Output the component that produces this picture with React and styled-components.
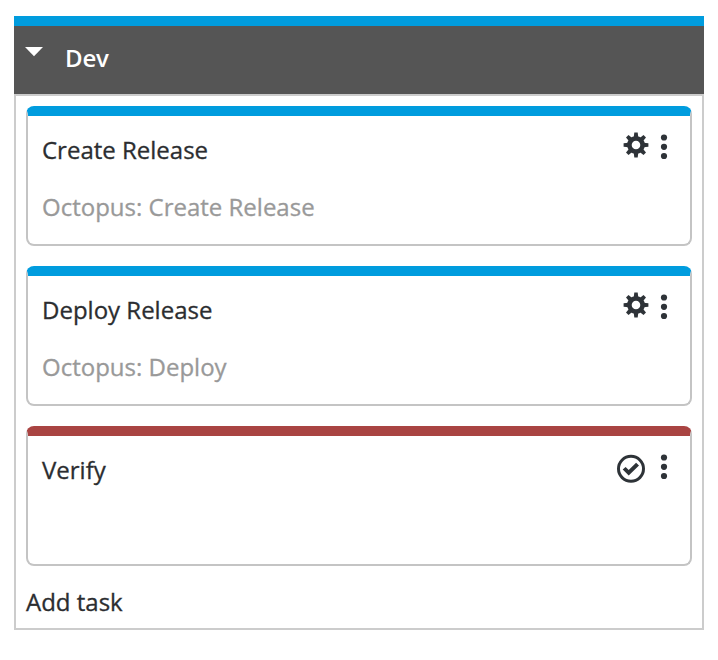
import React from 'react';
import styled, { createGlobalStyle } from 'styled-components';

const Global = createGlobalStyle`
  * { box-sizing: border-box; }
  body {
    margin: 0;
    background: #fff;
    color: #2b2d30;
    font-family: "Open Sans", sans-serif;
    font-size: 24px;
    line-height: 34px;
    -webkit-text-stroke: 0.3px currentColor;
  }
`;

const Phase = styled.section`
  width: 690px;
  margin: 16px 14px 0;
`;

const Header = styled.header`
  display: flex;
  align-items: flex-start;
  height: 78px;
  padding: 20px 0 0 11px;
  border-top: 10px solid #009cde;
  background: #555;
  color: #fff;
`;

const Title = styled.h1`
  margin: -5px 0 0 22px;
  font-size: 24px;
  line-height: 34px;
  font-weight: 600;
  letter-spacing: -0.2px;
  -webkit-text-stroke: 0;
`;

const TaskList = styled.div`
  display: flex;
  flex-direction: column;
  height: 536px;
  padding: 10px;
  border: 2px solid #ccc;
`;

const Card = styled.article`
  display: flex;
  flex-shrink: 0;
  justify-content: space-between;
  height: 140px;
  margin-bottom: 20px;
  padding: 17px 23px 0 14px;
  border: 2px solid #c4c4c4;
  border-top: 10px solid ${p => p.$accent};
  border-radius: 8px;
`;

const Name = styled.div``;

const Kind = styled.div`
  margin-top: 23px;
  color: #999;
`;

const Actions = styled.div`
  display: flex;
  align-items: flex-start;
  gap: 12px;
  color: #2e3338;
`;

const Icon = styled.svg`
  display: block;
  fill: currentColor;
  overflow: visible;
`;

const AddTask = styled.div`
  flex-shrink: 0;
  margin-top: -1px;
`;

const Caret = () => (
  <Icon width="18" height="11">
    <path d="M0 1h18l-9 9.3z" />
  </Icon>
);

const Gear = () => (
  <Icon width="25" height="25" viewBox="-12 -12 25 25">
    <circle r="6.6" fill="none" stroke="currentColor" strokeWidth="4.6" />
    {[0, 45, 90, 135, 180, 225, 270, 315].map(a => (
      <path key={a} transform={`rotate(${a})`} d="M-2.3-7.5-1.7-12.4H1.7L2.3-7.5z" />
    ))}
  </Icon>
);

const Check = () => (
  <Icon width="28" height="28" viewBox="0 0 28 28">
    <circle cx="14" cy="13.8" r="12.5" fill="none" stroke="currentColor" strokeWidth="3" />
    <path d="M5.7 14.6l2.9-2.6 3.1 3 7.4-7.2 2.9 2.8-10.3 10z" />
  </Icon>
);

const Menu = () => (
  <Icon width="6" height="28" viewBox="0 0 6 28">
    <circle cx="3" cy="4.5" r="3.1" />
    <circle cx="3" cy="13.8" r="3.1" />
    <circle cx="3" cy="23" r="3.1" />
  </Icon>
);

const tasks = [
  { name: 'Create Release', kind: 'Octopus: Create Release', accent: '#009cde', icon: Gear },
  { name: 'Deploy Release', kind: 'Octopus: Deploy', accent: '#009cde', icon: Gear },
  { name: 'Verify', accent: '#a94442', icon: Check },
];

const ActionIcon = styled.span`
  margin-top: ${p => p.$top}px;
  margin-right: ${p => p.$right}px;
`;

export default function App() {
  return (
    <>
      <Global />
      <Phase>
        <Header>
          <Caret />
          <Title>Dev</Title>
        </Header>
        <TaskList>
          {tasks.map(({ name, kind, accent, icon: TaskIcon }) => (
            <Card key={name} $accent={accent}>
              <div>
                <Name>{name}</Name>
                {kind && <Kind>{kind}</Kind>}
              </div>
              <Actions>
                <ActionIcon $top={TaskIcon === Gear ? 0 : 2} $right={TaskIcon === Gear ? 0 : 4}>
                  <TaskIcon />
                </ActionIcon>
                <Menu />
              </Actions>
            </Card>
          ))}
          <AddTask>Add task</AddTask>
        </TaskList>
      </Phase>
    </>
  );
}
